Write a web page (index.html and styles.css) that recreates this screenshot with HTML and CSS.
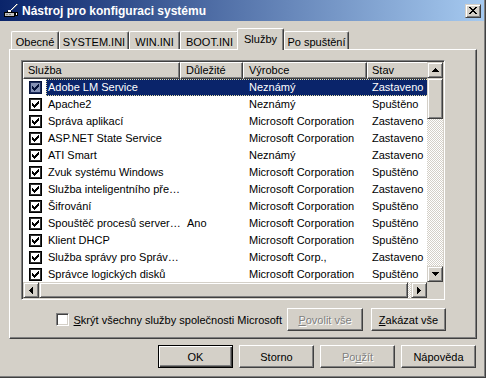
FILE: index.html
```html
<!DOCTYPE html>
<html lang="cs">
<head>
  <meta charset="UTF-8">
  <title>Nástroj pro konfiguraci systému</title>
  <link rel="stylesheet" href="styles.css">
</head>
<body>
  <!-- shared glyphs -->
  <svg class="defs" width="0" height="0">
    <symbol id="chk" viewBox="0 0 7 7"><path d="M0 2h1v3h-1z M1 3h1v3h-1z M2 4h1v3h-1z M3 3h1v3h-1z M4 2h1v3h-1z M5 1h1v3h-1z M6 0h1v3h-1z"/></symbol>
    <symbol id="up" viewBox="0 0 7 4"><path d="M3 0h1v1h-1z M2 1h3v1h-3z M1 2h5v1h-5z M0 3h7v1h-7z"/></symbol>
    <symbol id="down" viewBox="0 0 7 4"><path d="M0 0h7v1h-7z M1 1h5v1h-5z M2 2h3v1h-3z M3 3h1v1h-1z"/></symbol>
    <symbol id="left" viewBox="0 0 4 7"><path d="M0 3h1v1h-1z M1 2h1v3h-1z M2 1h1v5h-1z M3 0h1v7h-1z"/></symbol>
    <symbol id="right" viewBox="0 0 4 7"><path d="M0 0h1v7h-1z M1 1h1v5h-1z M2 2h1v3h-1z M3 3h1v1h-1z"/></symbol>
  </svg>

  <div class="window">
    <div class="titlebar">
      <svg class="app-icon" width="16" height="16" viewBox="0 0 16 16" shape-rendering="crispEdges">
        <path d="M1 9h11v5h-11z" fill="#000"/>
        <path d="M2 10h9v3h-9z" fill="#c0c0c0"/>
        <path d="M3 11h2v1h-2z M6 11h2v1h-2z" fill="#808080"/>
        <path d="M4 8h5v2h-5z" fill="#000"/>
        <path d="M5 7h3v2h-3z" fill="#fff"/>
        <path d="M8 6h1v1h-1z M9 5h1v1h-1z M10 4h1v1h-1z M11 3h1v1h-1z M12 2h1v1h-1z M13 1h1v1h-1z" fill="#fff"/>
        <path d="M9 6h1v1h-1z M10 5h1v1h-1z M11 4h1v1h-1z M12 3h1v1h-1z M13 2h1v1h-1z M14 1h1v1h-1z" fill="#808080"/>
        <path d="M12 9h3v4h-3z" fill="#000"/>
        <path d="M13 10h1v2h-1z" fill="#fff"/>
      </svg>
      <span class="title">Nástroj pro konfiguraci systému</span>
      <div class="close">
        <svg width="8" height="7" viewBox="0 0 8 7" shape-rendering="crispEdges"><path d="M0 0h2v1h-2z M6 0h2v1h-2z M1 1h2v1h-2z M5 1h2v1h-2z M2 2h4v1h-4z M3 3h2v1h-2z M2 4h4v1h-4z M1 5h2v1h-2z M5 5h2v1h-2z M0 6h2v1h-2z M6 6h2v1h-2z"/></svg>
      </div>
    </div>

    <div class="client">
      <div class="tabs">
        <div class="tab tab-obecne">Obecné</div>
        <div class="tab tab-system">SYSTEM.INI</div>
        <div class="tab tab-win">WIN.INI</div>
        <div class="tab tab-boot">BOOT.INI</div>
        <div class="tab tab-sluzby active">Služby</div>
        <div class="tab tab-start">Po spuštění</div>
      </div>

      <div class="panel">
        <div class="listview">
          <div class="lv-grid">
            <div class="list">
              <div class="header">
                <div class="hcell">Služba</div>
                <div class="hcell">Důležité</div>
                <div class="hcell">Výrobce</div>
                <div class="hcell">Stav</div>
              </div>

              <div class="row selected">
                <div class="cb-cell"><span class="cb"><svg><use href="#chk"/></svg></span></div>
                <div class="cells"><span>Adobe LM Service</span><span></span><span>Neznámý</span><span>Zastaveno</span></div>
              </div>
              <div class="row">
                <div class="cb-cell"><span class="cb"><svg><use href="#chk"/></svg></span></div>
                <div class="cells"><span>Apache2</span><span></span><span>Neznámý</span><span>Spuštěno</span></div>
              </div>
              <div class="row">
                <div class="cb-cell"><span class="cb"><svg><use href="#chk"/></svg></span></div>
                <div class="cells"><span>Správa aplikací</span><span></span><span>Microsoft Corporation</span><span>Zastaveno</span></div>
              </div>
              <div class="row">
                <div class="cb-cell"><span class="cb"><svg><use href="#chk"/></svg></span></div>
                <div class="cells"><span>ASP.NET State Service</span><span></span><span>Microsoft Corporation</span><span>Zastaveno</span></div>
              </div>
              <div class="row">
                <div class="cb-cell"><span class="cb"><svg><use href="#chk"/></svg></span></div>
                <div class="cells"><span>ATI Smart</span><span></span><span>Neznámý</span><span>Zastaveno</span></div>
              </div>
              <div class="row">
                <div class="cb-cell"><span class="cb"><svg><use href="#chk"/></svg></span></div>
                <div class="cells"><span>Zvuk systému Windows</span><span></span><span>Microsoft Corporation</span><span>Spuštěno</span></div>
              </div>
              <div class="row">
                <div class="cb-cell"><span class="cb"><svg><use href="#chk"/></svg></span></div>
                <div class="cells"><span>Služba inteligentního pře…</span><span></span><span>Microsoft Corporation</span><span>Zastaveno</span></div>
              </div>
              <div class="row">
                <div class="cb-cell"><span class="cb"><svg><use href="#chk"/></svg></span></div>
                <div class="cells"><span>Šifrování</span><span></span><span>Microsoft Corporation</span><span>Spuštěno</span></div>
              </div>
              <div class="row">
                <div class="cb-cell"><span class="cb"><svg><use href="#chk"/></svg></span></div>
                <div class="cells"><span>Spouštěč procesů server…</span><span>Ano</span><span>Microsoft Corporation</span><span>Spuštěno</span></div>
              </div>
              <div class="row">
                <div class="cb-cell"><span class="cb"><svg><use href="#chk"/></svg></span></div>
                <div class="cells"><span>Klient DHCP</span><span></span><span>Microsoft Corporation</span><span>Spuštěno</span></div>
              </div>
              <div class="row">
                <div class="cb-cell"><span class="cb"><svg><use href="#chk"/></svg></span></div>
                <div class="cells"><span>Služba správy pro Správ…</span><span></span><span>Microsoft Corp.,</span><span>Zastaveno</span></div>
              </div>
              <div class="row">
                <div class="cb-cell"><span class="cb"><svg><use href="#chk"/></svg></span></div>
                <div class="cells"><span>Správce logických disků</span><span></span><span>Microsoft Corporation</span><span>Spuštěno</span></div>
              </div>
            </div>

            <!-- vertical scrollbar -->
            <div class="vscroll">
              <div class="sb-btn"><svg width="7" height="4"><use href="#up"/></svg></div>
              <div class="thumb vthumb"></div>
              <div class="track"></div>
              <div class="sb-btn"><svg width="7" height="4"><use href="#down"/></svg></div>
            </div>

            <!-- horizontal scrollbar -->
            <div class="hscroll">
              <div class="sb-btn"><svg width="4" height="7"><use href="#left"/></svg></div>
              <div class="thumb hthumb"></div>
              <div class="track"></div>
              <div class="sb-btn"><svg width="4" height="7"><use href="#right"/></svg></div>
            </div>
            <div class="corner"></div>
          </div>
        </div>

        <div class="options">
          <label class="check-label"><span class="cb cb-plain"></span><span><u>S</u>krýt všechny služby společnosti Microsoft</span></label>
          <button class="btn btn-wide" disabled><u>P</u>ovolit vše</button>
          <button class="btn"><u>Z</u>akázat vše</button>
        </div>
      </div>

      <div class="buttons">
        <button class="btn default">OK</button>
        <button class="btn">Storno</button>
        <button class="btn" disabled>Po<u>u</u>žít</button>
        <button class="btn">Nápověda</button>
      </div>
    </div>
  </div>
</body>
</html>
```

FILE: styles.css
```css
body {
  margin: 0;
  font-family: "Liberation Sans", Arial, sans-serif;
  font-size: 11px;
  color: #000;
  background: #d4d0c8;
}

.defs {
  position: absolute;
}

.window {
  width: 486px;
  height: 378px;
  box-sizing: border-box;
  background: #d4d0c8;
  border-right: 1px solid #404040;
  border-bottom: 1px solid #404040;
  box-shadow: inset -1px -1px #808080;
  padding: 0 1px 1px 0;
  display: flex;
  flex-direction: column;
}

/* Title bar */
.titlebar {
  height: 21px;
  flex: none;
  display: flex;
  align-items: center;
  padding: 0 3px;
  background: linear-gradient(to right, #0a246a, #a6caf0);
  color: #fff;
}

.app-icon {
  flex: none;
}

.title {
  margin-left: 3px;
  font-weight: bold;
  font-size: 12px;
  white-space: nowrap;
}

.close {
  margin-left: auto;
  width: 16px;
  height: 14px;
  box-sizing: border-box;
  background: #d4d0c8;
  border: 1px solid;
  border-color: #d4d0c8 #404040 #404040 #d4d0c8;
  box-shadow: inset 1px 1px #fff, inset -1px -1px #808080;
  display: flex;
  align-items: center;
  justify-content: center;
}

/* Client area */
.client {
  flex: 1;
  display: flex;
  flex-direction: column;
  padding: 7px 8px 0 9px;
}

.tabs {
  display: flex;
  align-items: flex-end;
  height: 21px;
  padding-left: 2px;
  position: relative;
  z-index: 1;
}

.tab {
  box-sizing: border-box;
  height: 18px;
  border: 1px solid;
  border-color: #fff #404040 transparent #fff;
  border-bottom: 0;
  border-radius: 2px 2px 0 0;
  box-shadow: inset -1px 0 #808080;
  padding-top: 2px;
  line-height: 16px;
  text-align: center;
  white-space: nowrap;
  background: #d4d0c8;
}

.tab.active {
  height: 22px;
  margin-left: -2px;
  margin-bottom: -1px;
}

.tab-obecne { width: 48px; }
.tab-system { width: 70px; }
.tab-win { width: 51px; }
.tab-boot { width: 59px; }
.tab-sluzby { width: 47px; }
.tab-start { width: 65px; }

.panel {
  width: 468px;
  height: 290px;
  box-sizing: border-box;
  border: 1px solid;
  border-color: #fff #404040 #404040 #fff;
  box-shadow: inset -1px -1px #808080;
  padding: 10px 0 0 11px;
}

/* List view */
.listview {
  width: 424px;
  height: 240px;
  box-sizing: border-box;
  border: 1px solid;
  border-color: #808080 #fff #fff #808080;
  box-shadow: inset 1px 1px #404040, inset -1px -1px #d4d0c8;
  padding: 1px;
}

.lv-grid {
  display: grid;
  grid-template-columns: 404px 16px;
  grid-template-rows: 220px 16px;
  height: 100%;
}

.list {
  overflow: hidden;
  background: #fff;
}

.header {
  display: grid;
  grid-template-columns: 157px 63px 124px 80px;
  height: 17px;
}

.hcell {
  box-sizing: border-box;
  border: 1px solid;
  border-color: #fff #404040 #404040 #fff;
  box-shadow: inset -1px -1px #808080;
  background: #d4d0c8;
  padding-left: 4px;
  line-height: 15px;
  white-space: nowrap;
  overflow: hidden;
}

.hcell:nth-child(2),
.hcell:nth-child(3) {
  padding-left: 5px;
}

.row {
  display: flex;
  height: 17px;
  align-items: center;
}

.cb-cell {
  width: 23px;
  flex: none;
  box-sizing: border-box;
  padding-left: 6px;
  display: flex;
}

.cb {
  width: 13px;
  height: 13px;
  box-sizing: border-box;
  border: 1px solid #000;
  box-shadow: inset 0 0 0 1px #303030;
  background: #fff;
  display: flex;
  align-items: center;
  justify-content: center;
}

.cb svg {
  width: 7px;
  height: 7px;
  fill: #000;
}

.cb-plain {
  border-color: #808080 #fff #fff #808080;
  box-shadow: inset 1px 1px #404040, inset -1px -1px #d4d0c8;
}

.cells {
  display: grid;
  grid-template-columns: 134px 63px 124px 80px;
  height: 17px;
  line-height: 17px;
  flex: none;
}

.cells span {
  white-space: nowrap;
  overflow: hidden;
}

.cells span:nth-child(1) { padding-left: 2px; }
.cells span:nth-child(2) { padding-left: 7px; }
.cells span:nth-child(3) { padding-left: 6px; }
.cells span:nth-child(4) { padding-left: 5px; }

.row.selected .cells {
  background: #0a246a;
  color: #fff;
  outline: 1px dotted #e8e0a8;
  outline-offset: -1px;
}

.row.selected .cb {
  background: #8491b4;
  border-color: #05123a;
  box-shadow: inset 0 0 0 1px #1a2a5a;
}

.row.selected .cb svg {
  fill: #05123a;
}

/* Scroll bars */
.vscroll,
.hscroll {
  display: flex;
  background-color: #fff;
  background-image: repeating-conic-gradient(#d4d0c8 0 25%, #fff 0 50%);
  background-size: 2px 2px;
}

.vscroll {
  flex-direction: column;
}

.sb-btn,
.thumb {
  box-sizing: border-box;
  background: #d4d0c8;
  border: 1px solid;
  border-color: #d4d0c8 #404040 #404040 #d4d0c8;
  box-shadow: inset 1px 1px #fff, inset -1px -1px #808080;
}

.sb-btn {
  width: 16px;
  height: 16px;
  flex: none;
  display: flex;
  align-items: center;
  justify-content: center;
}

.sb-btn svg {
  fill: #000;
}

.vthumb {
  height: 41px;
  flex: none;
}

.hthumb {
  width: 369px;
  flex: none;
}

.track {
  flex: 1;
}

.corner {
  background: #d4d0c8;
}

/* Options under the list */
.options {
  width: 425px;
  margin-top: 8px;
  display: flex;
  align-items: center;
  justify-content: flex-end;
}

.check-label {
  display: flex;
  align-items: center;
  gap: 5px;
  margin-right: 5px;
  white-space: nowrap;
}

/* Buttons */
.btn {
  width: 75px;
  height: 23px;
  box-sizing: border-box;
  padding: 0;
  font: inherit;
  color: #000;
  background: #d4d0c8;
  border: 1px solid;
  border-color: #fff #404040 #404040 #fff;
  box-shadow: inset -1px -1px #808080;
  border-radius: 0;
}

.btn-wide {
  width: 76px;
  margin-right: 8px;
}

.btn:disabled {
  color: #808080;
  text-shadow: 1px 1px #fff;
}

.btn.default {
  border-color: #000;
  box-shadow: inset 1px 1px #fff, inset -1px -1px #404040, inset -2px -2px #808080;
}

.buttons {
  display: flex;
  justify-content: flex-end;
  gap: 6px;
  margin-top: 6px;
}
```
